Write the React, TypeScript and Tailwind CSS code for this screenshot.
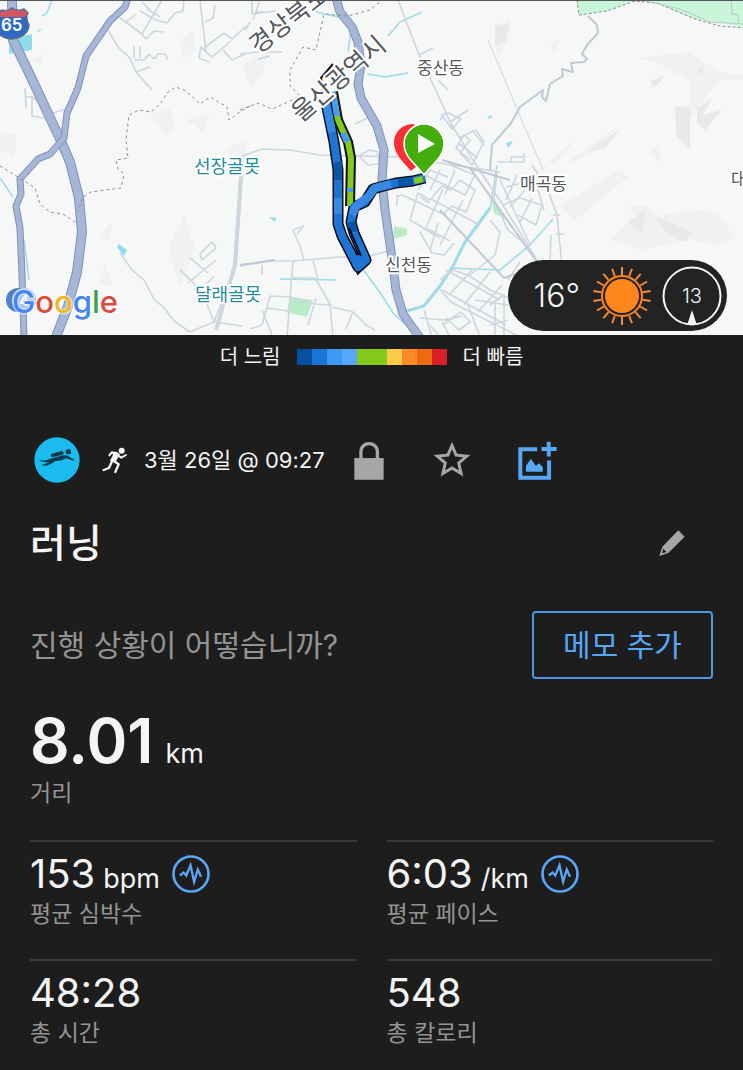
import { MdStarBorder } from "react-icons/md";

const paceColors = [
  "bg-[#0650a4]",
  "bg-[#1976d6]",
  "bg-[#3d97f5]",
  "bg-[#57a8fb]",
  "bg-[#82ca1c]",
  "bg-[#82ca1c]",
  "bg-[#fccb4c]",
  "bg-[#fa8c28]",
  "bg-[#ee6a10]",
  "bg-[#d92024]",
];

const stats = [
  { value: "153", unit: "bpm", label: "평균 심박수", chart: true },
  { value: "6:03", unit: "/km", label: "평균 페이스", chart: true },
  { value: "48:28", unit: "", label: "총 시간", chart: false },
  { value: "548", unit: "", label: "총 칼로리", chart: false },
];

const highways = [
  { d: "M12 0L13 40L30 75L60 139L70 162L79 198L82 232L77 272L68 306L56 337", width: 8 },
  { d: "M128 -2L125 7L110 21L86 56L78 88L67 113L64 138L50 154L38 159L20 179L21 194L16 206L20 228L22 275L24 337", width: 5 },
  { d: "M336 -2L340 12L352 27L358 42L361 65L358 84L361 98L377 126L384 150L382 180L385 210L392 258L396 290L403 314L420 338", width: 7 },
];

const minorRoads = [
  "M108 30L118 47L130 58L136 72L152 90M134 60L144 60L149 54L154 59L158 54L165 54L168 60M134 46V58M140 46V58M136 72L150 67",
  "M119 17L142 34L162 0M126 22L136 14M140 11L156 20L167 23L175 13L183 11L184 0M147 9L160 17M142 34L146 39L154 31L163 32M142 2L150 10",
  "M200 0L206 52L201 47L199 58L209 62M204 48L224 33L232 39L246 26M206 52L212 57L231 41M223 50L232 60L245 54M215 5L213 18L205 22",
  "M25 88L26 108M25 97H32V116L43 118L53 113L66 109M32 97L42 104",
  "M120 253L132 270L144 280L154 299L165 309L174 321L190 332L214 322L242 326",
  "M258 170L242 176L236 265L214 322M200 286L214 322",
  "M180 270L201 290L214 276M200 254L212 242L216 248L202 260ZM190 258L208 273M188 283L216 260",
  "M240 157L262 149L290 150L320 155L400 157L440 163L500 172",
  "M240 266L270 261L293 261L340 257L370 256L395 249M293 261L287 337M293 278L315 278L330 304L333 337M313 260L318 280",
  "M304 260L300 246L293 230L304 226M297 234L303 227M270 296L291 297L315 304L332 305M266 308L289 311M316 298L308 325M270 296L262 325L250 329M262 310L272 335M332 307L353 312L366 325L375 330M353 312L346 329M262 265V275",
  "M240 54L258 52L282 52M252 0V14L275 11M253 20L260 0M250 22L245 30M255 12L271 12M258 59L270 56",
  "M355 124L376 114M354 158L370 150L378 152L379 164L368 165L360 157",
  "M398 0L419 55L439 97L450 122L476 165L503 205L540 265M419 55L433 48M430 72L445 64M438 80L448 90M450 122L468 110M441 114L452 129L461 119L446 112L440 120",
  "M460 137L476 130L484 142L472 165L460 153L470 140L464 135L456 148L470 160M472 130L484 145M458 143L478 158",
  "M397 206V196L402 195L443 214L452 206L466 212L475 190L460 180L451 190L442 186L430 200L418 193L410 220L440 238M431 199L480 225M443 189L425 230M463 200L440 245M420 197L430 203",
  "M418 190L430 170L448 177M425 175L465 195L475 175L450 165M440 170L430 190M455 170L445 195M420 232L432 253L444 255L454 243M428 229L450 241M438 223L430 250",
  "M420 318L446 320L462 316M430 325L440 337M442 322L450 337M424 310L432 337M446 318L459 330L470 322L461 312L444 324M468 305L480 337",
  "M440 280L453 270L470 276L490 290L509 298M446 270L500 300M442 290L506 325M450 294L472 270M464 305L490 272M478 312L502 285M440 290L451 302L520 337",
  "M497 172L494 200L508 230L520 240M500 180L530 245M503 205L520 198L542 205L536 225L518 215M506 187L535 180L544 210M517 175L506 200M525 190L510 207M532 198L520 222",
  "M490 305L504 295V337M490 325L508 320M495 300V337M475 300L508 305M508 280L520 262M490 220L500 232L495 255L470 275M551 235L550 262",
  "M498 162H524V153M511 162V157H524",
  "M532 165L548 190L557 215L562 265M553 215H560M556 234H564",
];

const mainRoads = [
  "M588 16L597 25L598 33L587 45L582 54L587 59L584 62L571 63L573 72L562 69L563 76L550 84L546 101L542 97L543 90L520 107L511 123L492 145L490 170",
  "M240 265L275 260M442 160L510 180M440 210L504 278L548 262M470 168L515 231L540 266",
];

const speedPath = "M425 178L413 181L396 183L380 187L373 189L365 202L354 207L351 222L354 233L366 260L358 267L342 236L338 224L338 170L334 142L326 103";

function CourseMap() {
  return (
    <svg
      role="img"
      aria-label="러닝 코스 지도"
      viewBox="0 0 743 335"
      preserveAspectRatio="xMidYMid slice"
      className="block h-full w-full font-['Inter','Noto_Sans_CJK_KR',sans-serif]"
    >
      <rect width="743" height="335" fill="#f6f7f7" />

      {/* terrain */}
      <g fill="#f0f1f2">
        <path d="M495 25L511 20L507 42L497 58ZM550 45L559 38L554 56ZM640 58L688 52L720 72L745 75V80L720 80L700 105L688 125L690 80L655 62Z" />
        <path d="M570 160L618 126L600 148L570 163ZM535 175L575 138L565 155ZM650 152L660 144V163ZM150 115L170 107L175 130L165 134ZM187 120L210 113L203 132Z" />
        <path d="M610 240L635 216L628 207L648 205L655 216L700 210L718 213L735 238L720 245L690 240L640 250ZM560 205L620 170L628 177L575 220Z" />
        <path d="M105 263L112 285L98 286ZM170 245L185 215L195 250L180 285L172 265ZM0 135L17 134L14 158L0 150ZM30 60L45 54L40 65ZM650 85L667 75L652 90Z" />
        <path d="M180 40L193 30L195 50L183 60ZM243 65L270 50L262 75L250 90ZM98 238L112 222L110 240ZM225 150L245 140V160ZM655 290L675 285L670 300Z" />
      </g>
      <g fill="#e7e9ea">
        <path d="M675 107L690 106V150L676 135ZM697 108L712 98L703 115L722 110L705 130L697 123ZM588 152L620 129L605 148ZM650 81L665 75L655 87ZM697 72L703 62V74Z" />
        <path d="M655 216L692 232L684 242L665 232ZM495 26L510 23L506 40L495 46ZM628 222L646 210L642 234Z" />
      </g>
      <path d="M577 0L579 15L607 11L635 0L662 5L695 19L743 27V0Z" fill="#c9f5d9" />
      <path d="M577 0L579 15L607 11L635 1L657 3L695 19L720 26L745 28" fill="none" stroke="#858b90" strokeDasharray="3 2" />
      <path d="M650 2L680 9L710 22L743 24M731 0L732 14L738 15L739 24" fill="none" stroke="#b9c8c9" />
      <g fill="#b9ebc9">
        <path d="M290 297L313 300L307 317L287 312ZM394 226L407 229V235L393 239ZM492 202L497 203L507 220L494 213Z" />
      </g>
      <g fill="#8fdcec">
        <path d="M9 39L32 34V50L9 54ZM119 244L127 250L124 256L117 247ZM269 217L276 218L275 222ZM506 143L513 141L508 148ZM487 117L493 115L490 119Z" />
      </g>
      <g fill="none" stroke="#9cdbe7" strokeWidth="1.5">
        <path d="M316 12L343 18L351 30L348 52M422 12L400 22L388 36M408 73L385 77L367 74M362 268L381 294L393 313L406 325M490 210L497 165M450 268L500 270L530 245L553 219M0 178L13 197M24 240L29 280M280 279L336 280M52 0L47 13L42 16M41 29L37 32" />
        <path d="M400 313L424 306L440 286L452 268L465 242L490 208" strokeWidth="3" />
      </g>

      <g fill="none" stroke="#cfd5df" strokeWidth="1.6" strokeLinejoin="round">
        {minorRoads.map((d) => (
          <path key={d} d={d} />
        ))}
        <path d="M241 176L235 265L216 330" strokeWidth="4" />
        <path d="M488 40L520 116L543 170" strokeWidth="1" />
      </g>
      <g fill="none" stroke="#c1c8d4" strokeWidth="2" strokeLinejoin="round">
        {mainRoads.map((d) => (
          <path key={d} d={d} />
        ))}
      </g>
      <g fill="none" strokeLinejoin="round">
        {highways.map(({ d, width }) => (
          <g key={d}>
            <path d={d} stroke="#8192b8" strokeWidth={width + 2} />
            <path d={d} stroke="#a6b6d7" strokeWidth={width} />
          </g>
        ))}
      </g>
      <path
        d="M250 106L238 113L229 120L227 107L210 97L200 104L186 91L176 87L168 92L160 104L151 112L139 110L129 115L126 140L128 158L116 160L118 169L124 174L121 188L105 190L91 192L83 197L78 212M0 166L18 177L35 188L40 204L50 212L63 214L78 224M240 110L258 103L272 109L288 102L300 96L290 86L290 70L303 47L316 50L324 14L348 16L370 10L382 0"
        fill="none"
        stroke="#8c9094"
        strokeDasharray="3 3"
      />

      {/* interstate shield */}
      <path d="M2 10Q8 12 12 8Q17 12 24 9L28 13Q25 17 29 25Q28 37 12 39Q-2 38 -5 27V13Z" fill="#2f69c4" stroke="#5c6c8b" strokeWidth="1.5" />
      <path d="M-1 17L1 11Q8 12 12 9Q17 12 24 10L27 13L25 17Z" fill="#d75563" />
      <text x="1" y="31" fontSize="17" fontWeight="600" fill="#fff">65</text>

      {/* course */}
      <g fill="none" strokeLinejoin="round" strokeLinecap="butt">
        <path d="M323 92L321 78L333 64" stroke="#111" strokeWidth="2" />
        <path d="M333 92L338 120L348 142L351 158L350 206" stroke="#111" strokeWidth="10" />
        <path d={speedPath} stroke="#090f19" strokeWidth="11" />
        <path d="M350 257L358 273L369 261L363 254" fill="#1e74d2" stroke="#090f19" strokeWidth="3" strokeLinejoin="miter" />
        <path d="M333 92L338 120L348 142L351 158L350 206" stroke="#82ca1c" strokeWidth="6" />
        <path d="M333 92L337 116M343 133L347 142M350 188V192" stroke="#469bf2" strokeWidth="6" />
        <path d={speedPath} stroke="#1e74d2" strokeWidth="8" />
        <path d="M413 181L398 183M338 162V180M351 222L353 232" stroke="#0b55a8" strokeWidth="8" />
        <path d="M391 184L375 188L369 196L357 205L352 215M326 103L332 132M338 198V214" stroke="#3989e2" strokeWidth="8" />
        <path d="M423 179L414 181" stroke="#82ca1c" strokeWidth="6" />
        <path d="M349 228L361 256" stroke="#090f19" strokeWidth="2" />
      </g>

      {/* place names */}
      <g stroke="#fff" strokeWidth="4" strokeLinejoin="round" paintOrder="stroke" fill="#55585d">
        <text x="417" y="74" fontSize="17">중산동</text>
        <text x="520" y="190" fontSize="17">매곡동</text>
        <text x="385" y="271" fontSize="17">신천동</text>
        <text x="731" y="185" fontSize="17">대</text>
        <g fontSize="25">
          <text transform="translate(258 55) rotate(-38)">경상북도</text>
          <text transform="translate(301 123) rotate(-41)">울산광역시</text>
        </g>
        <g fill="#248c9c" fontSize="18">
          <text x="194" y="173">선장골못</text>
          <text x="195" y="301">달래골못</text>
        </g>
      </g>

      {/* finish and start pins */}
      <path d="M411 171C404 163 394 154 394 143C394 131 403 124 414 124L424 160Z" fill="#fb2d36" />
      <path d="M424 175C416 164 404 157 404 144A20 20 0 0 1 444 144C444 157 432 164 424 175Z" fill="#43ad0b" stroke="#fff" strokeWidth="1.5" />
      <path d="M418 134V153L435 144Z" fill="#fff" />

      <circle cx="18" cy="300" r="12" fill="#4e82c8" />
      <circle cx="24" cy="300" r="12" fill="#a9c7ef" />
      <text x="19" y="306" fontSize="15" fontWeight="600" fill="#fff">4</text>
      <text x="12" y="313" fontSize="31" fontWeight="500" stroke="#fff" strokeWidth="3" strokeOpacity="0.5" strokeLinejoin="round" paintOrder="stroke">
        <tspan fill="#4285f4">G</tspan>
        <tspan fill="#db4b40">o</tspan>
        <tspan fill="#f2b81d">o</tspan>
        <tspan fill="#4285f4">g</tspan>
        <tspan fill="#36a352">l</tspan>
        <tspan fill="#db4b40">e</tspan>
      </text>
      <path d="M0 0H743" stroke="#55575a" strokeWidth="2" />
    </svg>
  );
}

function SunIcon() {
  const rays = Array.from({ length: 18 }, (_, i) => i * 20);
  return (
    <svg viewBox="0 0 60 60" className="h-15 w-15" aria-hidden="true">
      <circle cx="30" cy="30" r="17" fill="#ff861d" />
      <circle cx="30" cy="30" r="20" fill="none" stroke="#ff861d" strokeWidth="2" />
      {rays.map((angle) => (
        <path key={angle} d="M30 9V1" stroke="#f58a32" strokeWidth="2" transform={`rotate(${angle} 30 30)`} />
      ))}
    </svg>
  );
}

function WeatherBadge() {
  return (
    <div className="absolute right-4 bottom-1 flex h-[71px] w-[219px] items-center justify-end rounded-full bg-[#222323] pr-[5px] text-[#f4f4f4]">
      <span className="mr-3 text-[32px] leading-8 font-light">16°</span>
      <SunIcon />
      <span className="relative ml-2.5 flex h-15 w-15 items-center justify-center">
        <svg viewBox="0 0 60 60" className="absolute inset-0" aria-hidden="true">
          <circle cx="30" cy="30" r="28.5" fill="none" stroke="#f4f4f4" strokeWidth="2" />
          <path d="M30 44L34.500 58Q30 60 25.500 58Z" fill="#f4f4f4" />
        </svg>
        <span className="text-xl leading-5 font-light">13</span>
      </span>
    </div>
  );
}

function DiverAvatar() {
  return (
    <svg viewBox="42 51 138 138" className="h-[46px] w-[46px]" aria-hidden="true">
      <circle cx="111" cy="120" r="68" fill="#19bced" />
      <g fill="#123c4b">
        <circle cx="145" cy="95" r="8" />
        <path d="M96 101L125 93Q130 93 131 98Q131 102 127 104L98 112Q93 112 92 107Q92 103 96 101Z" />
        <path d="M59 121Q77 124 91 116L129 106L140 106L163 119L160 122L138 115L126 121L105 124Q94 133 80 137Q70 135 62 136Q75 132 90 127Q75 128 59 123Z" />
      </g>
    </svg>
  );
}

function RunnerIcon() {
  return (
    <svg viewBox="245 80 76 78" className="h-[26px] w-[26px]" aria-hidden="true">
      <circle cx="303" cy="91" r="9" fill="#f4f4f4" />
      <path d="M273 95L290 96L298 102L283 127L268 121L277 103Z" fill="#f4f4f4" />
      <g fill="none" stroke="#f4f4f4" strokeLinecap="round" strokeLinejoin="round">
        <path d="M288 98L273 96L266 105M292 105L302 112L316 104" strokeWidth="6" />
        <path d="M279 122L294 132L284 155M274 123L265 143L249 149" strokeWidth="7" />
      </g>
    </svg>
  );
}

function LockIcon() {
  return (
    <svg viewBox="42 61 91 117" className="h-[39px] w-[30px]" aria-hidden="true">
      <path d="M43 112H132V178H43Z" fill="#a6a6a6" />
      <path d="M63 114V93C63 60 113 60 113 93V114" fill="none" stroke="#a6a6a6" strokeWidth="10" />
    </svg>
  );
}

function AddPhotoIcon() {
  return (
    <svg viewBox="534 56 118 116" className="h-[39px] w-[39px]" aria-hidden="true">
      <path d="M592 80H541V166H628V114M627 57V102M605 79H651" fill="none" stroke="#58a6f7" strokeWidth="12" />
      <path d="M558 148V131L573 109L588 130L598 122L609 134V148Z" fill="#58a6f7" />
    </svg>
  );
}

function PencilIcon() {
  return (
    <svg viewBox="955 330 78 78" className="h-[26px] w-[26px]" aria-hidden="true">
      <path d="M1013 331L1032 350L983 399L956 408L965 380ZM968 386L964 400L977 396Z" fill="#a6a6a6" fillRule="evenodd" />
    </svg>
  );
}

function ChartIcon() {
  return (
    <svg viewBox="467 74 115 115" className="h-[38px] w-[38px]" aria-hidden="true">
      <circle cx="524.500" cy="131.500" r="53" fill="none" stroke="#58a6f7" strokeWidth="8" />
      <path d="M491 136L502 127L510 136L523 105L534 155L545 118L555 140" fill="none" stroke="#58a6f7" strokeWidth="7" />
    </svg>
  );
}

export default function App() {
  return (
    <main
      lang="ko"
      className="min-h-screen bg-[#1d1d1d] font-['Inter','Noto_Sans_CJK_KR',sans-serif] text-[#f4f4f4]"
    >
      <div className="relative h-[335px] overflow-hidden">
        <CourseMap />
        <WeatherBadge />
      </div>

      <div className="flex h-11 items-center justify-center gap-4 text-xl leading-6">
        <span>더 느림</span>
        <div className="flex">
          {paceColors.map((color, i) => (
            <span key={i} className={`h-4 w-[15px] ${color}`} />
          ))}
        </div>
        <span>더 빠름</span>
      </div>

      <div className="px-[30px] pt-[58px]">
        <header className="flex h-[46px] items-center pl-1">
          <DiverAvatar />
          <span className="mr-4 ml-[22px]">
            <RunnerIcon />
          </span>
          <time className="w-[186px] text-[22px] leading-8 whitespace-nowrap">3월 26일 @ 09:27</time>
          <button type="button" aria-label="비공개" className="ml-6">
            <LockIcon />
          </button>
          <button type="button" aria-label="즐겨찾기" className="ml-[46px]">
            <MdStarBorder size={44} color="#a6a6a6" />
          </button>
          <button type="button" aria-label="사진 추가" className="ml-[44px]">
            <AddPhotoIcon />
          </button>
        </header>

        <div className="mt-9 flex h-12 items-center justify-between pr-7">
          <h1 className="text-[39px] leading-12 font-medium">러닝</h1>
          <button type="button" aria-label="이름 편집">
            <PencilIcon />
          </button>
        </div>

        <div className="mt-11 flex items-center justify-between">
          <p className="text-[30px] leading-10 text-[#939393]">진행 상황이 어떻습니까?</p>
          <button
            type="button"
            className="h-[68px] w-[181px] rounded-sm border-2 border-[#4f96e0] text-[30px] leading-10 text-[#58a6f7]"
          >
            메모 추가
          </button>
        </div>

        <section className="mt-[30px]">
          <p className="flex h-16 items-baseline gap-3 leading-16">
            <span className="text-[62px] font-semibold">8.01</span>
            <span className="text-[27px]">km</span>
          </p>
          <p className="mt-1 text-[23px] leading-8 text-[#939393]">거리</p>
        </section>

        <dl className="mt-[31px] grid grid-cols-2 gap-x-[30px]">
          {stats.map(({ value, unit, label, chart }) => (
            <div key={label} className="flex h-[119px] flex-col border-t-2 border-[#3a3a3a] pt-2">
              <dt className="order-2 text-[23px] leading-8 text-[#939393]">{label}</dt>
              <dd className="flex h-12 items-center gap-3">
                <span className="flex h-12 items-baseline gap-2 leading-12">
                  <span className="text-[40px]">{value}</span>
                  {unit && <span className="text-[27px]">{unit}</span>}
                </span>
                {chart && (
                  <button type="button" aria-label={`${label} 그래프`}>
                    <ChartIcon />
                  </button>
                )}
              </dd>
            </div>
          ))}
        </dl>
      </div>
    </main>
  );
}
